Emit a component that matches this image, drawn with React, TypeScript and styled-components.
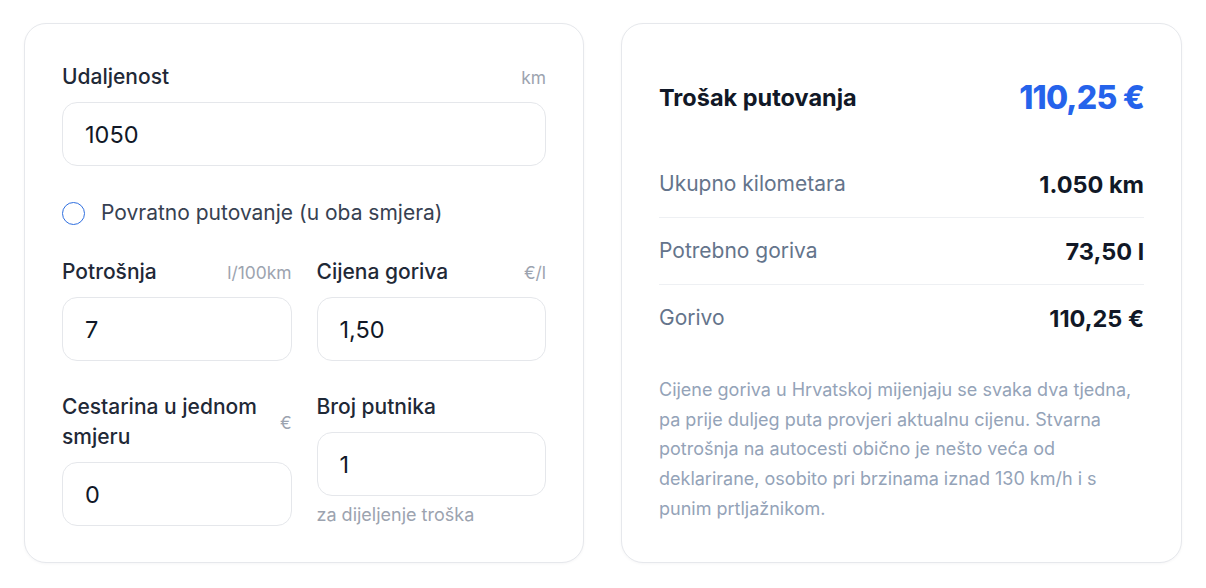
import styled, { createGlobalStyle } from "styled-components";

const GlobalStyle = createGlobalStyle`
  html, body {
    margin: 0;
    padding: 0;
    background: #ffffff;
  }
  body {
    font-family: "Inter", "Noto Sans", sans-serif;
    -webkit-font-smoothing: antialiased;
  }
`;

interface field {
  label: string;
  unit: string;
  value: string;
  hint?: string;
}

interface row {
  label: string;
  value: string;
}

const topFields: field[] = [
  { label: "Potrošnja", unit: "l/100km", value: "7" },
  { label: "Cijena goriva", unit: "€/l", value: "1,50" },
  { label: "Cestarina u jednom smjeru", unit: "€", value: "0" },
  { label: "Broj putnika", unit: "", value: "1", hint: "za dijeljenje troška" },
];

const rows: row[] = [
  { label: "Ukupno kilometara", value: "1.050 km" },
  { label: "Potrebno goriva", value: "73,50 l" },
  { label: "Gorivo", value: "110,25 €" },
];

function Field({ f }: { f: field }) {
  return (
    <FieldBox>
      <LabelRow>
        <Label>{f.label}</Label>
        {f.unit && <Unit>{f.unit}</Unit>}
      </LabelRow>
      <Input defaultValue={f.value} />
      {f.hint && <Hint>{f.hint}</Hint>}
    </FieldBox>
  );
}

export default function App() {
  return (
    <>
      <GlobalStyle />
      <Page>
        <Card>
          <Field f={{ label: "Udaljenost", unit: "km", value: "1050" }} />
          <RadioRow>
            <RadioCircle />
            <RadioText>Povratno putovanje (u oba smjera)</RadioText>
          </RadioRow>
          <Grid>
            {topFields.map((f) => (
              <Field key={f.label} f={f} />
            ))}
          </Grid>
        </Card>
        <Card $result>
          <Header>
            <Title>Trošak putovanja</Title>
            <Total>110,25 €</Total>
          </Header>
          <Rows>
            {rows.map((r) => (
              <Row key={r.label}>
                <RowLabel>{r.label}</RowLabel>
                <RowValue>{r.value}</RowValue>
              </Row>
            ))}
          </Rows>
          <Note>
            Cijene goriva u Hrvatskoj mijenjaju se svaka dva tjedna, pa prije duljeg puta provjeri aktualnu cijenu.
            Stvarna potrošnja na autocesti obično je nešto veća od deklarirane, osobito pri brzinama iznad 130 km/h i s
            punim prtljažnikom.
          </Note>
        </Card>
      </Page>
    </>
  );
}

const Page = styled.div`
  display: grid;
  grid-template-columns: 560px 561px;
  gap: 37px;
  padding: 23px 24px;
`;

const Card = styled.div<{ $result?: boolean }>`
  box-sizing: border-box;
  height: 540px;
  border: 1px solid #e6e8ec;
  border-radius: 22px;
  background: #ffffff;
  box-shadow: 0 1px 3px rgba(15, 23, 42, 0.04);
  padding: ${(p) => (p.$result ? "53px 37px 37px" : "38px 37px 37px")};
  display: flex;
  flex-direction: column;
`;

const FieldBox = styled.div`
  display: flex;
  flex-direction: column;
`;

const LabelRow = styled.div`
  display: flex;
  align-items: center;
  justify-content: space-between;
  gap: 12px;
  margin-bottom: 10px;
`;

const Label = styled.span`
  font-size: 21px;
  line-height: 30px;
  font-weight: 500;
  color: #1f2937;
`;

const Unit = styled.span`
  font-size: 17.4px;
  color: #9ca3af;
  white-space: nowrap;
`;

const Input = styled.input`
  box-sizing: border-box;
  width: 100%;
  height: 64px;
  border: 1.5px solid #e5e7eb;
  border-radius: 15px;
  padding: 0 22px;
  font-family: "Inter", sans-serif;
  font-size: 23.5px;
  color: #111827;
  background: #ffffff;
  outline: none;
`;

const Hint = styled.span`
  margin-top: 7px;
  font-size: 18px;
  line-height: 24px;
  color: #9ca3af;
`;

const RadioRow = styled.label`
  display: flex;
  align-items: center;
  gap: 16px;
  margin: 32px 0 29px;
`;

const RadioCircle = styled.span`
  box-sizing: border-box;
  width: 23px;
  height: 23px;
  border: 1.7px solid #2f6fe0;
  border-radius: 50%;
`;

const RadioText = styled.span`
  font-size: 21px;
  line-height: 30px;
  color: #374151;
`;

const Grid = styled.div`
  display: grid;
  grid-template-columns: 1fr 1fr;
  column-gap: 25px;
  row-gap: 31px;
  align-items: start;
`;

const Header = styled.div`
  display: flex;
  align-items: center;
  justify-content: space-between;
  height: 40px;
`;

const Title = styled.h2`
  margin: 0;
  font-size: 23.5px;
  font-weight: 700;
  color: #111827;
`;

const Total = styled.span`
  font-size: 32px;
  font-weight: 800;
  letter-spacing: -0.8px;
  color: #2563eb;
`;

const Rows = styled.div`
  margin-top: 34px;
  display: flex;
  flex-direction: column;
`;

const Row = styled.div`
  display: flex;
  align-items: center;
  justify-content: space-between;
  padding: 18px 0;
  border-bottom: 1px solid #eef0f3;
  &:last-child {
    border-bottom: none;
  }
`;

const RowLabel = styled.span`
  font-size: 21px;
  line-height: 30px;
  color: #64748b;
`;

const RowValue = styled.span`
  font-size: 23.5px;
  font-weight: 700;
  color: #111827;
`;

const Note = styled.p`
  margin: 24px 0 0;
  font-size: 18px;
  line-height: 29.7px;
  color: #94a3b8;
`;
